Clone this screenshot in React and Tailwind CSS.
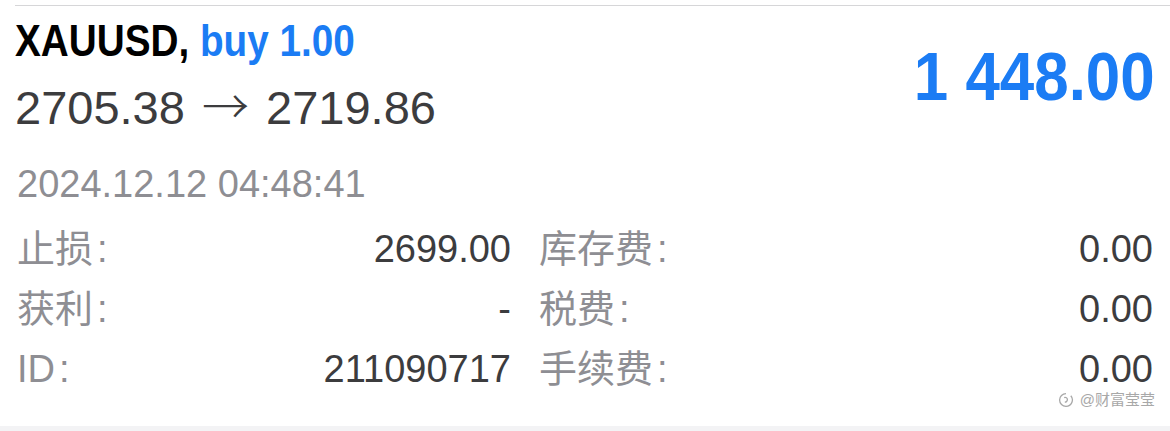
import React from 'react';

const rows = [
  { left: '止损', leftValue: '2699.00', right: '库存费', rightValue: '0.00' },
  { left: '获利', leftValue: '-', right: '税费', rightValue: '0.00' },
  { left: 'ID', leftValue: '211090717', right: '手续费', rightValue: '0.00' },
];

function WatermarkIcon() {
  return (
    <svg width="16" height="16" viewBox="0 0 16 16" fill="none" stroke="#a8a8a8" strokeWidth="1.3">
      <path d="M8 1.6a6.4 6.4 0 1 0 0 12.8" />
      <path d="M8 14.4a6.4 6.4 0 0 0 4.8-10.6" />
      <path d="M6.2 5.6c1.6-.6 3.2.4 3.2 2s-1.2 2.6-2.6 2.6" />
    </svg>
  );
}

function Label({ text }) {
  return (
    <span className="text-[#8e8e93]">
      {text}
      <span className="ml-[4px]">:</span>
    </span>
  );
}

export default function App() {
  return (
    <div
      className="w-[1170px] h-[431px] bg-white relative overflow-hidden flex flex-col"
      style={{ fontFamily: '"Liberation Sans", "Noto Sans CJK SC", sans-serif' }}
    >
      {/* separator */}
      <div className="h-[5px]" />
      <div className="ml-[15px] h-px bg-[#d6d6d8]" />

      {/* header */}
      <div className="flex justify-between pl-[15px] pr-[15px] pt-[9px]">
        <div>
          <div className="origin-left scale-x-[0.86] whitespace-nowrap text-[45px] leading-[52px] font-bold text-black">
            XAUUSD, <span className="text-[#1b7cf4]">buy 1.00</span>
          </div>
          <div className="mt-[11px] whitespace-nowrap text-[47px] leading-[52px] text-[#3c3c3e]">
            2705.38{' '}
            <span style={{ fontFamily: '"Noto Sans CJK SC", sans-serif' }} className="mx-[4px] font-light">→</span>{' '}
            2719.86
          </div>
        </div>
        <div className="mt-[27px] origin-right scale-x-[0.91] whitespace-nowrap text-[68px] leading-[68px] font-bold text-[#1b7cf4]">
          1 448.00
        </div>
      </div>

      {/* time */}
      <div className="mt-[28px] pl-[17px] text-[38px] leading-[44px] text-[#8e8e93]">2024.12.12 04:48:41</div>

      {/* details */}
      <div className="mt-[13px] pl-[17px] grid grid-cols-[494px_614px] gap-x-[28px]">
        {rows.map((row) => (
          <React.Fragment key={row.left}>
            <div className="flex justify-between text-[38px] leading-[60px]">
              <Label text={row.left} />
              <span className="text-[#3c3c3e]">{row.leftValue}</span>
            </div>
            <div className="flex justify-between text-[38px] leading-[60px]">
              <Label text={row.right} />
              <span className="text-[#3c3c3e]">{row.rightValue}</span>
            </div>
          </React.Fragment>
        ))}
      </div>

      {/* watermark */}
      <div className="absolute right-[15px] top-[391px] flex items-center gap-[6px] text-[15px] leading-[18px] text-[#a8a8a8]">
        <WatermarkIcon />
        <span>@财富莹莹</span>
      </div>

      <div className="mt-auto h-[5px] bg-[#f3f3f5]" />
    </div>
  );
}
